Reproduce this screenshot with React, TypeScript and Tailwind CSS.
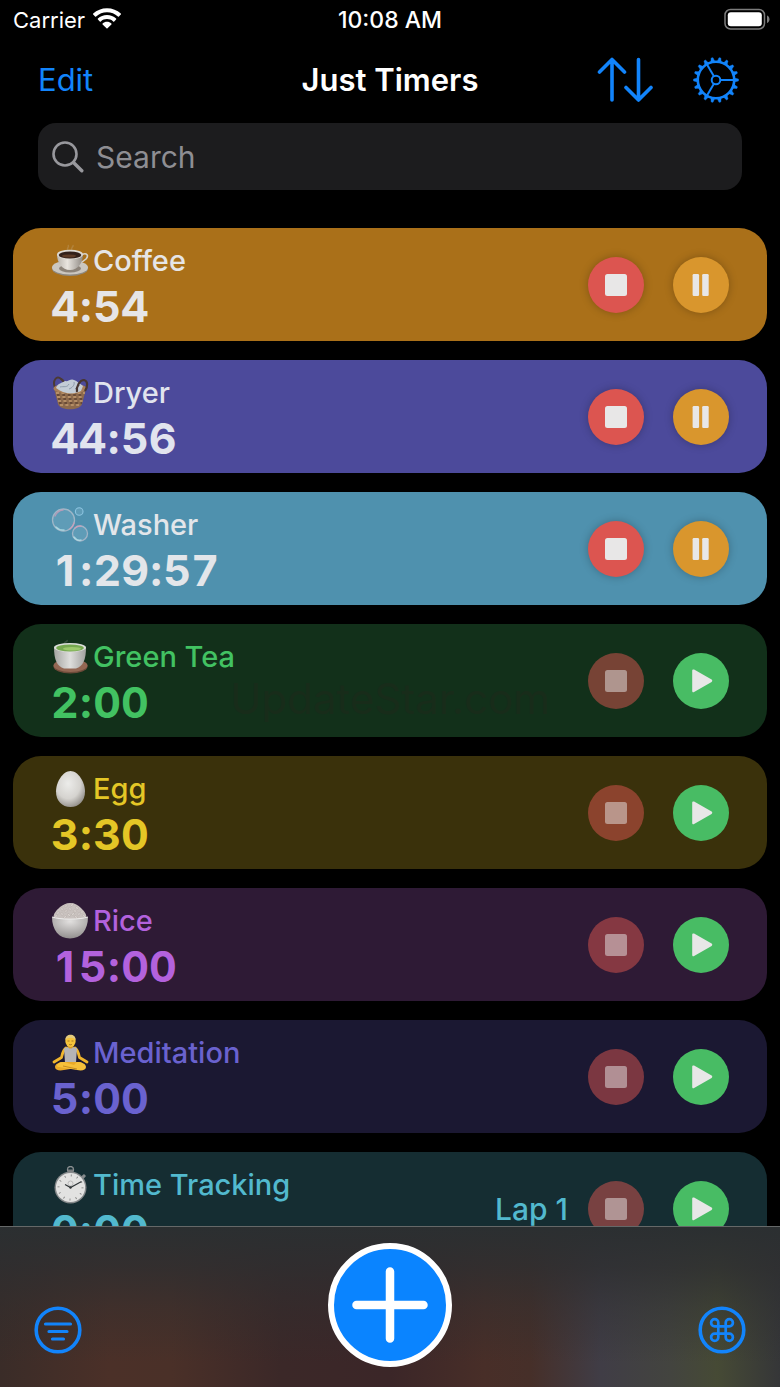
import { useState, type ReactNode } from 'react';

type Timer = {
  name: string;
  time: string;
  running: boolean;
  card: string;
  text: string;
  lap?: string;
  icon: ReactNode;
};

const emoji = 'block size-[38px] shrink-0';

function CoffeeIcon() {
  return (
    <svg viewBox="0 0 38 38" className={emoji} aria-hidden="true">
      <defs>
        <linearGradient id="cup" x1="0" x2="1">
          <stop offset="0" stopColor="#b9b4ad" />
          <stop offset=".4" stopColor="#e9e5df" />
          <stop offset="1" stopColor="#8f8a84" />
        </linearGradient>
      </defs>
      <path d="M17 8c-2-2 2-3 0-5M21 8c-2-2 2-3 1-5" stroke="#d8cfc0" strokeOpacity=".2" strokeWidth="1.5" fill="none" />
      <ellipse cx="19" cy="26.500" rx="18" ry="7.500" fill="#8e8980" />
      <ellipse cx="19" cy="25.500" rx="18" ry="7" fill="#cbc7c0" />
      <ellipse cx="19" cy="26.500" rx="11" ry="4" fill="#8c8379" />
      <path d="M31 12.500c5-2 7 1 4 4.500-2 2-4 3-7 4" stroke="#d6d1c8" strokeWidth="1.600" fill="none" />
      <path d="M6 12.500c0 8 5 15.500 13 15.500s13-7.500 13-15.500z" fill="url(#cup)" />
      <ellipse cx="19" cy="12.500" rx="13" ry="4.800" fill="#dedad3" />
      <ellipse cx="19" cy="13" rx="11.300" ry="3.600" fill="#33211a" />
      <ellipse cx="18" cy="14" rx="7" ry="1.600" fill="#5d3b27" />
    </svg>
  );
}

function BasketIcon() {
  return (
    <svg viewBox="0 0 38 38" className={emoji} aria-hidden="true">
      <path d="M4 14C1 6 6 1 10 5c2 1 3 3 3 5" stroke="#4c3a34" strokeWidth="2" fill="none" />
      <path d="M3 14 7 30c2 7 22 7 24 0l4-15z" fill="#8d6a4c" />
      <path d="M5 19h29M6 23h27M7 27h25M9 31h21" stroke="#b58e66" strokeWidth="1.8" strokeDasharray="3 2.4" fill="none" />
      <path d="M6 21h27M7 25h25M8 29h23" stroke="#5c4030" strokeWidth="1.3" strokeDasharray="2.6 2.8" fill="none" />
      <ellipse cx="19" cy="14.500" rx="16.500" ry="5" fill="#a97f59" />
      <path d="M5 14c2-5 6-5 9-7 3 1 6-3 9-1 3 1 6 4 9 6l-2 5c-8 4-18 3-25-3z" fill="#c3ccd6" />
      <path d="M9 13c4-1 7 1 9-3M18 15c3-1 6-4 5-7M24 15l5-4" stroke="#8e9bab" strokeWidth="1" fill="none" />
      <path d="M26 18c-1-6 3-12 7-12 4 1 4 6 1 11" stroke="#463531" strokeWidth="2.2" fill="none" />
    </svg>
  );
}

function BubblesIcon() {
  return (
    <svg viewBox="0 0 38 38" className={emoji} aria-hidden="true">
      <g fill="#b7dbe8" fillOpacity=".16">
        <circle cx="12.500" cy="14" r="11" stroke="#9fb6c7" strokeWidth="1.3" />
        <circle cx="28.200" cy="5.500" r="3.800" stroke="#8cc4e0" strokeWidth="1.1" />
        <circle cx="29" cy="27.500" r="7.500" stroke="#a1b4c7" strokeWidth="1.3" />
      </g>
      <g fill="none" strokeLinecap="round" strokeOpacity=".7">
        <path d="M4 10a10 10 0 0 1 8-6M23 17a11 11 0 0 1-4 6M24 22a7 7 0 0 1 6-2" stroke="#d59bb8" strokeWidth="1.5" />
        <path d="M5 21a10 10 0 0 0 8 3M23 31a7 7 0 0 0 7 3" stroke="#b9e8ee" strokeWidth="1.5" />
      </g>
    </svg>
  );
}

function TeaIcon() {
  return (
    <svg viewBox="0 0 38 38" className={emoji} aria-hidden="true">
      <defs>
        <linearGradient id="bowl" x1="0" x2="1">
          <stop offset="0" stopColor="#a5a5a2" />
          <stop offset=".5" stopColor="#dededc" />
          <stop offset="1" stopColor="#a2a19f" />
        </linearGradient>
      </defs>
      <path d="M14 5c-1-1 3-1 2-3" stroke="#9fa99f" strokeOpacity=".25" strokeWidth="1.5" fill="none" />
      <ellipse cx="19.500" cy="28.500" rx="17" ry="7" fill="#6d4a39" />
      <ellipse cx="19.500" cy="27.500" rx="17" ry="6.500" fill="#936753" />
      <path d="M3 9.500c0 12 3 19 10 21h12c7-2 10-9 10-21z" fill="url(#bowl)" />
      <ellipse cx="19" cy="9.500" rx="16" ry="4.500" fill="#dcdedb" />
      <ellipse cx="19" cy="10" rx="13.800" ry="3.400" fill="#76a850" />
      <ellipse cx="21" cy="10.700" rx="9" ry="1.800" fill="#9cc86c" />
    </svg>
  );
}

function EggIcon() {
  return (
    <svg viewBox="0 0 38 38" className={emoji} aria-hidden="true">
      <defs>
        <radialGradient id="egg" cx=".42" cy=".35" r=".7">
          <stop offset="0" stopColor="#ececea" />
          <stop offset=".6" stopColor="#d5d3cf" />
          <stop offset="1" stopColor="#8f8b86" />
        </radialGradient>
      </defs>
      <path d="M19.500 1C27 1 34 12 34 21.500 34 31 28 37 19.500 37S5 31 5 21.500C5 12 12 1 19.500 1z" fill="url(#egg)" />
    </svg>
  );
}

const grains = [
  [7, 11], [11, 7], [15, 4], [21, 3], [26, 6], [31, 10], [11, 12], [15, 9], [19, 7], [24, 9], [28, 12], [18, 13], [22, 12], [5, 14], [33, 14], [14, 15], [25, 15],
];

function RiceIcon() {
  return (
    <svg viewBox="0 0 38 38" className={emoji} aria-hidden="true">
      <defs>
        <radialGradient id="rice" cx=".5" cy=".2" r=".8">
          <stop offset="0" stopColor="#e2e0df" />
          <stop offset="1" stopColor="#93908f" />
        </radialGradient>
      </defs>
      <path d="M2.500 17C2 11 6 8 9 5c3-2 6-4 10-4 5 0 8 2 11 5 3 3 6 6 5.500 11z" fill="#c9c2bf" />
      {grains.map(([x, y]) => (
        <ellipse key={`${x}-${y}`} cx={x} cy={y} rx="1.800" ry=".9" fill="#ddd7d4" stroke="#aaa19d" strokeWidth=".4" transform={`rotate(${x * 23} ${x} ${y})`} />
      ))}
      <path d="M1 15c0 13 7 21.500 18 21.500S37 28 37 15c-8 2.800-28 2.800-36 0z" fill="url(#rice)" />
      <path d="M1 15c8 2.800 28 2.800 36 0" stroke="#efeeed" strokeWidth="1" fill="none" />
    </svg>
  );
}

function MeditationIcon() {
  return (
    <svg viewBox="0 0 38 38" className={emoji} aria-hidden="true">
      <path d="M15 14c-3 2-3.500 5-4.500 9.500L3 28M24 14c3 2 3.500 5 4.500 9.500L36 28" stroke="#efb52c" strokeWidth="2.800" strokeLinecap="round" strokeLinejoin="round" fill="none" />
      <path d="M16.500 9h6v6h-6z" fill="#d99a22" />
      <ellipse cx="19.500" cy="7" rx="5.200" ry="6" fill="#f5c33b" />
      <path d="M14.300 6c0-7 10.400-7 10.400 0-2-3-8-3-10.400 0z" fill="#e4cb7d" />
      <path d="M16.500 7h2M20.500 7h2M18 10.300c1 .7 2 .7 3 0" stroke="#986719" strokeWidth=".8" fill="none" />
      <path d="M13 14c2 0 3-1 4-1 1 2 4 2 5 0 1 0 2 1 4 1l-1 15H14z" fill="#b5b4b5" />
      <path d="M13 28c-5 0-9 2-9 5s4 4 9 3l18-3c2 0 3-2 1-3-2-2-3-2-6-2z" fill="#e9a928" />
      <path d="M26 28c5 0 9 2 9 5s-4 4-9 3L8 33c-2 0-3-2-1-3 2-2 3-2 6-2l10 3z" fill="#f6c03a" />
      <path d="M12 32l14 3" stroke="#b77d1c" strokeWidth=".8" />
    </svg>
  );
}

function StopwatchIcon() {
  return (
    <svg viewBox="0 0 38 38" className={emoji} aria-hidden="true">
      <circle cx="19.500" cy="3.500" r="3" fill="none" stroke="#8a8f91" strokeWidth="1.300" />
      <path d="M17 3.500h5V7h-5z" fill="#7b7e80" />
      <path d="m30 10.500 3-2.500 2 2-2.500 3z" fill="#858a8c" />
      <circle cx="19.500" cy="21.500" r="16" fill="#85888a" />
      <circle cx="19.500" cy="21.500" r="14.600" fill="#e2e2e1" />
      <circle cx="19.500" cy="21.500" r="12" fill="none" stroke="#777" strokeWidth="2" strokeDasharray=".8 5.483" />
      <circle cx="19.500" cy="17.500" r="2.500" fill="none" stroke="#aaa" strokeWidth=".7" />
      <path d="M14 18.500l5.500 3 11-6" stroke="#303638" strokeWidth="1.100" fill="none" />
      <circle cx="19.500" cy="21.500" r="1.200" fill="#303638" />
    </svg>
  );
}

const timers: Timer[] = [
  { name: 'Coffee', time: '4:54', running: true, card: 'bg-[#aa7019]', text: 'text-[#e6e5e6]', icon: <CoffeeIcon /> },
  { name: 'Dryer', time: '44:56', running: true, card: 'bg-[#4c4a9b]', text: 'text-[#e1e4ee]', icon: <BasketIcon /> },
  { name: 'Washer', time: '1:29:57', running: true, card: 'bg-[#4f91ae]', text: 'text-[#e3e6ea]', icon: <BubblesIcon /> },
  { name: 'Green Tea', time: '2:00', running: false, card: 'bg-[#12301a]', text: 'text-[#42c262]', icon: <TeaIcon /> },
  { name: 'Egg', time: '3:30', running: false, card: 'bg-[#3a310b]', text: 'text-[#e4c626]', icon: <EggIcon /> },
  { name: 'Rice', time: '15:00', running: false, card: 'bg-[#2e1a35]', text: 'text-[#b362dd]', icon: <RiceIcon /> },
  { name: 'Meditation', time: '5:00', running: false, card: 'bg-[#1b1832]', text: 'text-[#6a62cf]', icon: <MeditationIcon /> },
  { name: 'Time Tracking', time: '0:00', running: false, card: 'bg-[#152d32]', text: 'text-[#52b9ce]', lap: 'Lap 1', icon: <StopwatchIcon /> },
];

// The tabular "1" has a foot, so the proportional one is centred in a digit-wide cell.
function partClass(part: string) {
  if (part === '1') return 'inline-block w-7 text-center';
  return part === ':' ? '' : 'tabular-nums';
}

function Clock({ value }: { value: string }) {
  return (
    <p className="text-[43px] leading-[44px] font-bold">
      {value.split(/([:1])/).filter(Boolean).map((part, i) => (
        <span key={i} className={partClass(part)}>{part}</span>
      ))}
    </p>
  );
}

function TimerCard({ timer }: { timer: Timer }) {
  const { running } = timer;
  return (
    <li className={`flex h-[113px] shrink-0 items-center rounded-[28px] px-[38px] ${timer.card} ${timer.text}`}>
      <div className="flex min-w-0 flex-1 flex-col gap-1">
        <div className="flex items-center gap-1">
          {timer.icon}
          <h2 className="text-[29px] leading-[38px] font-medium whitespace-nowrap">{timer.name}</h2>
        </div>
        <Clock value={timer.time} />
      </div>
      {timer.lap && <span className="mr-5 text-[30px] leading-[38px] font-medium">{timer.lap}</span>}
      <div className="flex gap-[29px]">
        <button
          type="button"
          aria-label={`Stop ${timer.name}`}
          disabled={!running}
          className={`flex size-14 items-center justify-center rounded-full ${running ? 'bg-[#dc5550] text-[#e8e7e7] shadow-[0_0_8px_rgba(0,0,0,0.25)]' : 'bg-[#dc5550]/50 text-[#e8e7e7]/50'}`}
        >
          <svg viewBox="0 0 22 22" className="size-[22px]" aria-hidden="true">
            <rect width="22" height="22" rx="2.500" fill="currentColor" />
          </svg>
        </button>
        <button
          type="button"
          aria-label={`${running ? 'Pause' : 'Start'} ${timer.name}`}
          className={`flex size-14 items-center justify-center rounded-full text-[#e8e7e7] ${running ? 'bg-[#d9962d] shadow-[0_0_8px_rgba(0,0,0,0.25)]' : 'bg-[#48bc64]'}`}
        >
          <svg viewBox="0 0 24 24" className="size-6" fill="currentColor" aria-hidden="true">
            {running ? (
              <>
                <rect x="3.600" y="1" width="6.500" height="22" rx="1.300" />
                <rect x="13.200" y="1" width="6.500" height="22" rx="1.300" />
              </>
            ) : (
              <path d="M3.200 1.600v20.400c0 1.100 1 1.500 1.900 1l17.500-10c.9-.6.9-1.800 0-2.400L5.100.600c-.9-.5-1.900-.1-1.900 1z" />
            )}
          </svg>
        </button>
      </div>
    </li>
  );
}

const teeth = Array.from({ length: 18 }, (_, i) => i * 20);

function GearIcon() {
  return (
    <svg viewBox="-23 -23 46 46" className="size-[46px]" fill="none" stroke="currentColor" aria-hidden="true">
      <circle r="18.200" strokeWidth="2.600" />
      <circle r="4.300" strokeWidth="2" />
      {teeth.map((a) => (
        <path key={a} d="M18.500-2 22.500-.9V.9L18.500 2z" fill="currentColor" strokeWidth=".4" strokeLinejoin="round" transform={`rotate(${a})`} />
      ))}
      {[0, 120, 240].map((a) => (
        <path key={a} d="M4.500 0H18" strokeWidth="2" transform={`rotate(${a})`} />
      ))}
    </svg>
  );
}

export default function App() {
  const [query, setQuery] = useState('');
  const shown = timers.filter((t) => t.name.toLowerCase().includes(query.toLowerCase()));

  return (
    <div className="flex h-screen flex-col overflow-hidden bg-black font-['Inter',sans-serif] text-white">
      <div className="grid h-10 shrink-0 grid-cols-3 items-center px-[13px] text-[22px] leading-7">
        <div className="flex items-center gap-2">
          <span>Carrier</span>
          <svg viewBox="0 0 28 21" className="mb-1 h-[21px] w-7" fill="currentColor" aria-label="Wi-Fi">
            <path d="M14 .2C8.700.200 3.800 2.200.2 5.600c-.3.300-.3.700 0 1l1.900 1.900c.3.300.7.300 1 0C6.100 5.800 9.800 4.300 14 4.300s7.900 1.500 10.900 4.200c.3.300.7.300 1 0l1.900-1.900c.3-.3.300-.7 0-1C24.200 2.200 19.300.200 14 .200z" />
            <path d="M14 7c-3.500 0-6.700 1.300-9.100 3.500-.3.300-.3.700 0 1l1.900 1.900c.3.300.7.300 1 0 1.700-1.500 3.800-2.300 6.200-2.300s4.500.8 6.200 2.300c.3.300.7.300 1 0l1.900-1.900c.3-.3.300-.7 0-1C20.700 8.300 17.500 7 14 7z" />
            <path d="M14 13.800c-1.700 0-3.200.6-4.400 1.600-.3.300-.3.700 0 1l3.900 3.900c.3.300.7.300 1 0l3.900-3.900c.3-.3.300-.7 0-1-1.200-1-2.700-1.600-4.400-1.600z" />
          </svg>
        </div>
        <span className="text-center text-[23px] font-medium">10:08 AM</span>
        <svg viewBox="0 0 46 22" className="-mr-[3px] mb-0.5 h-[22px] w-[46px] justify-self-end" aria-label="Battery full">
          <rect x="1" y="1.500" width="39.500" height="19.500" rx="5.500" fill="none" stroke="#7c7c7c" strokeWidth="1.500" />
          <rect x="3.800" y="4.300" width="34" height="14" rx="3" fill="#fff" />
          <path d="M43 7.500c3.300 1 3.300 6.500 0 7.500z" fill="#7c7c7c" />
        </svg>
      </div>

      <header className="grid h-[83px] shrink-0 grid-cols-3 items-center px-[38px] pb-1">
        <button type="button" className="justify-self-start text-[31px] leading-10 text-[#1284fb]">Edit</button>
        <h1 className="text-center text-[31px] leading-10 font-semibold whitespace-nowrap">Just Timers</h1>
        <div className="flex items-center gap-10 justify-self-end pr-[3px] text-[#1284fb]">
          <button type="button" aria-label="Sort timers">
            <svg viewBox="0 0 56 46" className="h-[46px] w-14" fill="none" stroke="currentColor" strokeWidth="3.600" strokeLinecap="round" strokeLinejoin="round" aria-hidden="true">
              <path d="M15 43V2.500M2.500 15l12.500-12.500L27.500 15M41.500 2.500v40.500M29 30.500l12.500 12.500 12.500-12.500" />
            </svg>
          </button>
          <button type="button" aria-label="Settings">
            <GearIcon />
          </button>
        </div>
      </header>

      <label className="mx-[38px] flex h-[67px] shrink-0 items-center gap-3 rounded-[18px] bg-[#1c1c1e] px-[14px] text-[#98989d]">
        <svg viewBox="0 0 32 32" className="size-8 shrink-0" fill="none" stroke="currentColor" strokeLinecap="round" aria-hidden="true">
          <circle cx="13" cy="13" r="11.500" strokeWidth="2.600" />
          <path d="m21.500 21.500 8.300 8.300" strokeWidth="3.400" />
        </svg>
        <input
          type="text"
          aria-label="Search timers"
          placeholder="Search"
          value={query}
          onChange={(e) => setQuery(e.target.value)}
          className="min-w-0 flex-1 bg-transparent text-[30px] leading-10 outline-none placeholder:text-[#8e8e93]"
        />
      </label>

      <main className="relative mt-[38px] min-h-0 flex-1 overflow-hidden px-[13px]">
        <ul className="flex flex-col gap-[19px]">
          {shown.map((t) => (
            <TimerCard key={t.name} timer={t} />
          ))}
        </ul>
        <span className="pointer-events-none absolute inset-x-0 top-[445px] text-center text-[42px] leading-[52px] text-[#182c1a]">UpdateStar.com</span>
      </main>

      <footer className="grid shrink-0 grid-cols-3 items-end border-t border-[#656868] bg-[linear-gradient(180deg,#2b2f31_0%,#2d2e30cc_25%,#2d2e3066_50%,#2d2e3000_85%),linear-gradient(90deg,#3a2c28_0%,#4b3028_14%,#4a3028_22%,#3b2828_36%,#3b2628_50%,#482e28_62%,#462f29_68%,#403d46_77%,#43443f_86%,#464a35_92%,#353638_100%)] px-[34px] pt-4 pb-5">
        <button type="button" aria-label="Filter timers" className="mb-[13px] justify-self-start text-[#1284fb]">
          <svg viewBox="0 0 48 48" className="size-12" fill="none" stroke="currentColor" strokeLinecap="round" aria-hidden="true">
            <circle cx="24" cy="24" r="21.800" strokeWidth="3.600" />
            <path d="M11.500 18h25M15 25.500h18M18.500 33h11" strokeWidth="3.200" />
          </svg>
        </button>
        <button type="button" aria-label="Add timer" className="flex size-[124px] items-center justify-center justify-self-center rounded-full border-[6px] border-white bg-[#0a84ff]">
          <svg viewBox="0 0 76 76" className="size-[76px]" fill="none" stroke="#fff" strokeWidth="8.500" strokeLinecap="round" aria-hidden="true">
            <path d="M38 4.500v67M4.500 38h67" />
          </svg>
        </button>
        <button type="button" aria-label="Shortcuts" className="mb-[13px] justify-self-end text-[#1284fb]">
          <svg viewBox="0 0 48 48" className="size-12" fill="none" stroke="currentColor" aria-hidden="true">
            <circle cx="24" cy="24" r="21.800" strokeWidth="3.600" />
            <path d="M20.300 20.300v-3.600A3.600 3.600 0 1 0 16.700 20.300h14.600A3.600 3.600 0 1 0 27.700 16.700v14.600A3.600 3.600 0 1 0 31.300 27.700H16.700A3.600 3.600 0 1 0 20.300 31.300z" strokeWidth="2.700" />
          </svg>
        </button>
      </footer>
    </div>
  );
}
